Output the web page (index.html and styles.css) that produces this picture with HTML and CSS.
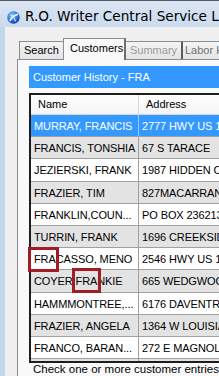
FILE: index.html
```html
<!DOCTYPE html>
<html>
<head>
<meta charset="utf-8">
<link rel="stylesheet" href="styles.css">
</head>
<body>
<div class="window">
  <div class="titlebar">
    <svg class="appicon" width="13" height="13" viewBox="0 0 13 13">
      <defs>
        <radialGradient id="g" cx="0.4" cy="0.35" r="0.7">
          <stop offset="0" stop-color="#9fd0ff"/>
          <stop offset="0.55" stop-color="#2f7de0"/>
          <stop offset="1" stop-color="#0d3f9c"/>
        </radialGradient>
      </defs>
      <circle cx="6.5" cy="6.5" r="6.2" fill="url(#g)"/>
      <path d="M3 9.5 C5 6 7 4.5 10.5 3.5" stroke="#ffffff" stroke-width="1.4" fill="none" stroke-linecap="round"/>
      <path d="M4 4 C6 5 7.5 7 8.5 10" stroke="#e8f4ff" stroke-width="1" fill="none" stroke-linecap="round"/>
    </svg>
    <span class="title">R.O. Writer Central Service Lane</span>
  </div>
  <div class="client">
    <div class="tabs">
      <div class="tab tab-search">Search</div>
      <div class="tab tab-active">Customers</div>
      <div class="tab tab-summary">Summary</div>
      <div class="tab tab-labor">Labor History</div>
    </div>
    <div class="panel">
      <div class="caption">Customer History - FRA</div>
      <div class="listview">
        <div class="lv-head">
          <div class="h1">Name</div>
          <div class="h2">Address</div>
        </div>
        <div class="lv-body">
          <div class="row sel"><div class="c1">MURRAY, FRANCIS</div><div class="c2">2777 HWY US 19 N</div></div>
          <div class="row alt"><div class="c1">FRANCIS, TONSHIA</div><div class="c2">67 S TARACE</div></div>
          <div class="row"><div class="c1">JEZIERSKI, FRANK</div><div class="c2">1987 HIDDEN CREEK</div></div>
          <div class="row alt"><div class="c1">FRAZIER, TIM</div><div class="c2">827MACARRANCE</div></div>
          <div class="row"><div class="c1">FRANKLIN,COUN...</div><div class="c2">PO BOX 236213</div></div>
          <div class="row alt"><div class="c1">TURRIN, FRANK</div><div class="c2">1696 CREEKSIDE</div></div>
          <div class="row"><div class="c1">FRACASSO, MENO</div><div class="c2">2546 HWY US 19</div></div>
          <div class="row alt"><div class="c1">COYER FRANKIE</div><div class="c2">665 WEDGWOOD</div></div>
          <div class="row"><div class="c1">HAMMMONTREE,...</div><div class="c2">6176 DAVENTRY</div></div>
          <div class="row alt"><div class="c1">FRAZIER, ANGELA</div><div class="c2">1364 W LOUISIANA</div></div>
          <div class="row"><div class="c1">FRANCO, BARAN...</div><div class="c2">272 E MAGNOLIA</div></div>
          <div class="row alt"><div class="c1">SMITH, FRANK</div><div class="c2">1410 BELCHER RD</div></div>
        </div>
        <div class="mark mark1"></div>
        <div class="mark mark2"></div>
      </div>
      <div class="hint">Check one or more customer entries from the list</div>
    </div>
  </div>
</div>
</body>
</html>
```
FILE: styles.css
```css
html, body {
  margin: 0;
  padding: 0;
}
body {
  width: 219px;
  height: 376px;
  overflow: hidden;
  background: #c4d6ec;
  font-family: "Liberation Sans", Arial, sans-serif;
  color: #000;
}
.window {
  height: 376px;
  box-sizing: border-box;
  border-top: 1px solid #505a66;
  display: flex;
  flex-direction: column;
}
.titlebar {
  height: 26px;
  box-sizing: border-box;
  padding: 9px 0 0 7px;
  display: flex;
  align-items: flex-start;
  background: linear-gradient(#dce6f3, #cbdaee);
  white-space: nowrap;
  overflow: hidden;
  flex: none;
}
.appicon {
  flex: none;
  margin-top: 1px;
}
.title {
  margin-left: 5px;
  font-family: "DejaVu Sans", sans-serif;
  font-size: 13.6px;
  line-height: 13px;
  color: #000;
}
.client {
  flex: 1;
  margin-left: 5px;
  background: #f0f0f0;
  padding: 11px 0 0 12px;
  display: flex;
  flex-direction: column;
  overflow: hidden;
}
.tabs {
  display: flex;
  align-items: flex-end;
  height: 21px;
  padding-left: 2px;
  flex: none;
  white-space: nowrap;
}
.tab {
  height: 18px;
  box-sizing: border-box;
  border: 1px solid #898c95;
  border-bottom: none;
  border-right: none;
  background: linear-gradient(#f4f4f4, #e4e4e4);
  font-size: 11px;
  line-height: 16px;
  padding-left: 4px;
  overflow: hidden;
  flex: none;
}
.tab-search {
  width: 44px;
}
.tab-active {
  width: 63px;
  height: 22px;
  margin-bottom: -1px;
  padding-left: 6px;
  line-height: 19px;
  background: #f9f9f9;
  border-right: 2px solid #6e6e6e;
  position: relative;
  z-index: 1;
}
.tab-summary {
  width: 57px;
  color: #9a9a9a;
  border-left: none;
  border-right: 2px solid #5c5c5c;
}
.tab-labor {
  width: 60px;
  color: #707070;
  border-left: none;
  padding-left: 2px;
}
.panel {
  flex: 1;
  border-top: 1px solid #898c95;
  border-left: 1px solid #898c95;
  background: #f9f9f9;
  padding: 6px 0 0 11px;
  display: flex;
  flex-direction: column;
  overflow: hidden;
}
.caption {
  height: 22px;
  background: #3399ff;
  color: #fff;
  font-size: 11px;
  line-height: 22px;
  padding-left: 4px;
  white-space: nowrap;
  flex: none;
}
.listview {
  margin-top: 5px;
  position: relative;
  height: 270px;
  box-sizing: border-box;
  border-top: 2px solid #1e1e1e;
  border-left: 2px solid #1e1e1e;
  border-bottom: 2px solid #1e1e1e;
  background: #fff;
  flex: none;
}
.lv-head {
  display: flex;
  height: 20px;
  box-sizing: border-box;
  border-bottom: 1px solid #d5d5d5;
  background: linear-gradient(#ffffff, #f4f4f4);
  font-size: 11px;
  line-height: 19px;
}
.h1 {
  width: 108px;
  padding-left: 7px;
  box-sizing: border-box;
  border-right: 1px solid #d5d5d5;
  flex: none;
}
.h2 {
  padding-left: 7px;
}
.lv-body {
  height: 246px;
  overflow: hidden;
}
.row {
  display: flex;
  height: 22.2px;
  box-sizing: border-box;
  border-bottom: 1px solid #a0a0a0;
  font-size: 11px;
  line-height: 22px;
  letter-spacing: -0.1px;
  white-space: nowrap;
  background: #fff;
}
.row.alt {
  background: #e3e3e3;
}
.row.sel {
  background: #3399ff;
  color: #fff;
}
.c1 {
  width: 108px;
  box-sizing: border-box;
  padding-left: 3px;
  border-right: 1px solid #a0a0a0;
  overflow: hidden;
  flex: none;
}
.row.sel .c1 {
  border-right-color: #9cc9f7;
}
.c2 {
  padding-left: 3px;
  overflow: hidden;
}
.mark {
  position: absolute;
  box-sizing: border-box;
  border: 3px solid #a31c24;
}
.mark1 {
  left: -3px;
  top: 152px;
  width: 31px;
  height: 25px;
}
.mark2 {
  left: 41px;
  top: 173px;
  width: 29px;
  height: 25px;
}
.hint {
  font-size: 11.5px;
  line-height: 13px;
  padding-left: 4px;
  white-space: nowrap;
}
```
